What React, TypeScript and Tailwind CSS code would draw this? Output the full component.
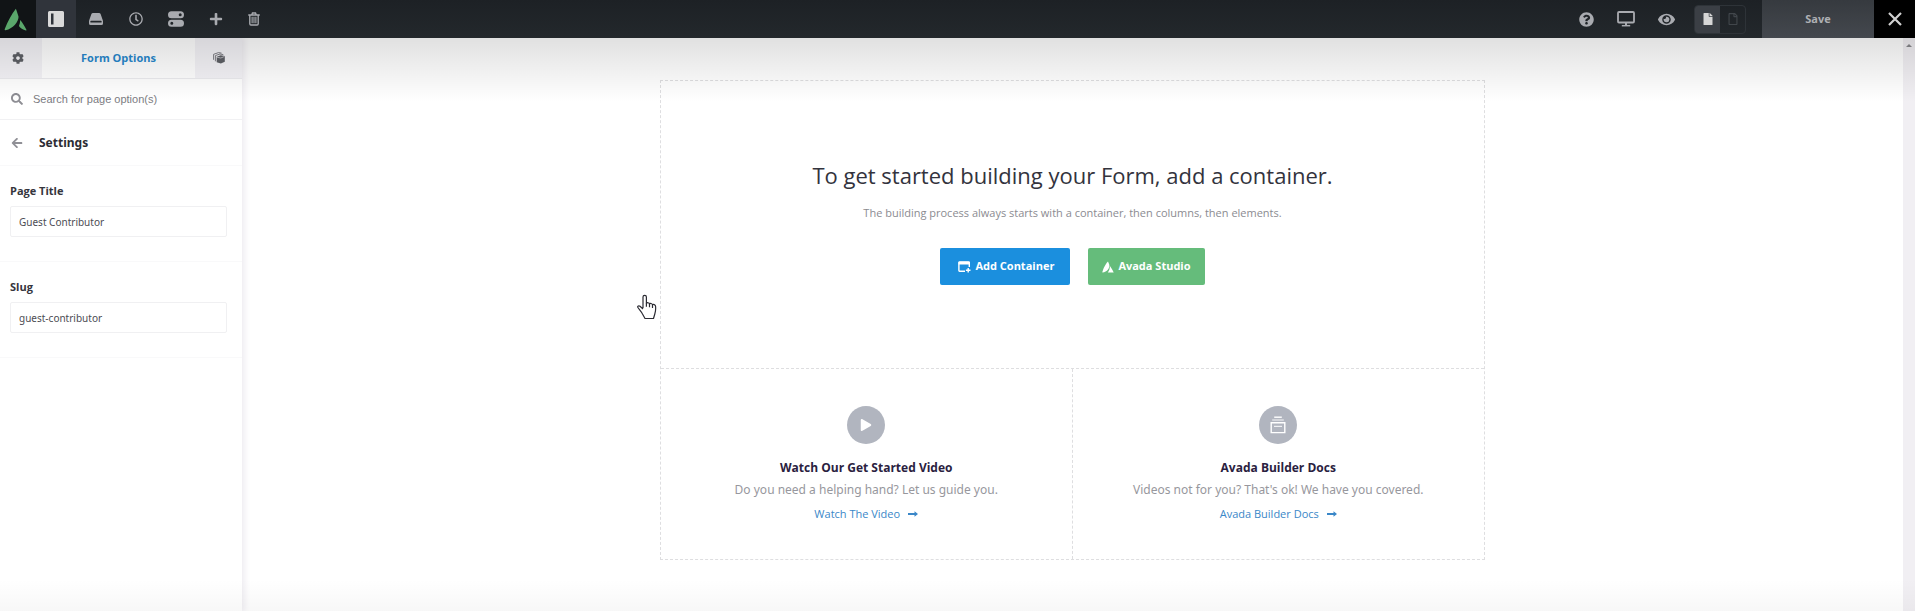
import type { ReactNode } from "react";
import { FaArrowLeft, FaCog, FaEye, FaFile, FaPlay, FaPlus, FaQuestionCircle, FaRegClock, FaRegFile, FaSearch } from "react-icons/fa";

function AvadaMark({ className }: { className?: string }) {
  return (
    <svg viewBox="0 0 24 24" fill="currentColor" className={className} aria-hidden="true">
      <path d="M12.400.8C13.400 3.600 14.600 7 15.200 9c-.2 5.600-5.200 12-13.600 14.200C.9 23.400.4 23 .8 22 4 14 8 6 12.400.8Z" />
      <path d="M17 12.500c2.400 3 4.700 7 6.400 10.200.2.500 0 .8-.5.700-3.200-.4-6-2.200-7.300-4.500.7-2 1.200-4.200 1.400-6.400Z" />
    </svg>
  );
}

function StudioMark() {
  return (
    <svg viewBox="0 0 12 12" fill="currentColor" className="size-3" aria-hidden="true">
      <path d="M6 .4 7.400 4C7.400 7.500 5.500 10.800.3 11.600.8 8 3.500 3 6 .4Z" />
      <path d="M7.800 4.800c1.500 2 3.200 4.800 3.900 6.800H5.800C7.300 9.800 7.900 7.500 7.800 4.800Z" />
    </svg>
  );
}

function PanelIcon() {
  return (
    <svg viewBox="0 0 16 16" className="size-4" fill="currentColor" aria-hidden="true">
      <path fillRule="evenodd" d="M1.500 0h13A1.500 1.500 0 0 1 16 1.500v13a1.500 1.500 0 0 1-1.500 1.500h-13A1.500 1.500 0 0 1 0 14.500v-13A1.500 1.500 0 0 1 1.500 0ZM3 2.500v11h2.500v-11Z" />
    </svg>
  );
}

function DriveIcon() {
  return (
    <svg viewBox="0 0 14 12" className="h-3 w-3.5" fill="currentColor" aria-hidden="true">
      <path fillRule="evenodd" d="M4 0h6c.8 0 1.300.4 1.600 1.100L13.700 7c.2.500.3.900.3 1.400v2A1.600 1.600 0 0 1 12.400 12H1.600A1.600 1.600 0 0 1 0 10.400v-2C0 7.900.1 7.500.3 7l2.100-5.900C2.700.4 3.200 0 4 0ZM2.200 7.800a.9.900 0 0 0 0 1.800h9.600a.9.900 0 0 0 0-1.800Z" />
    </svg>
  );
}

function TogglesIcon() {
  return (
    <svg viewBox="0 0 16 16" className="size-4" fill="currentColor" aria-hidden="true">
      <path fillRule="evenodd" d="M3.500.3h9a3.500 3.500 0 0 1 0 7h-9a3.500 3.500 0 0 1 0-7Zm8.700 2a1.500 1.500 0 1 0 0 3 1.500 1.500 0 0 0 0-3Z" />
      <path fillRule="evenodd" d="M3.500 8.700h9a3.500 3.500 0 0 1 0 7h-9a3.500 3.500 0 0 1 0-7Zm.3 2a1.500 1.500 0 1 0 0 3 1.500 1.500 0 0 0 0-3Z" />
    </svg>
  );
}

function TrashIcon() {
  return (
    <svg viewBox="0 0 14 16" className="h-3.5 w-3" fill="none" stroke="currentColor" aria-hidden="true">
      <path strokeWidth="1.600" d="M.3 3.400h13.400M4.300 3.200 5.200 1h3.600l.9 2.200M2.100 3.600v10c0 .9.5 1.400 1.300 1.400h7.200c.8 0 1.300-.5 1.300-1.400v-10" />
      <path strokeWidth="1.300" d="M4.800 5.500v7.500M7 5.500v7.500M9.200 5.500v7.500" />
    </svg>
  );
}

function DesktopIcon() {
  return (
    <svg viewBox="0 0 18 16" className="h-4 w-[18px]" fill="none" stroke="currentColor" aria-hidden="true">
      <rect x="1" y="1" width="16" height="10.500" rx="1" strokeWidth="1.800" />
      <path strokeWidth="2" d="M9 11v3.500" />
      <path strokeWidth="1.500" d="M4.800 14.700h8.400" />
    </svg>
  );
}

function CubesIcon() {
  return (
    <svg viewBox="0 0 12 12" className="size-3" aria-hidden="true">
      <path d="M.6 7.800V2.300L5.500.6l3 .5M2.400 9.300V3.600L7 2l3.300.6" fill="none" stroke="currentColor" strokeWidth=".8" />
      <path d="m3.700 4.800 4-1.500 4.100.7v5.800l-3.900 1.700-4.200-1.200Z" fill="currentColor" />
      <path d="m4 5.200 3.800.8 3.600-1.500" fill="none" stroke="#f1f0f4" strokeWidth=".6" />
    </svg>
  );
}

function AddContainerIcon() {
  return (
    <svg viewBox="0 0 13 12" className="h-3 w-[13px]" aria-hidden="true">
      <path d="M7 10.300H1.600a.7.700 0 0 1-.7-.7V1.700A.7.700 0 0 1 1.600 1h9a.7.700 0 0 1 .7.700V6" fill="none" stroke="currentColor" strokeWidth="1.400" />
      <path d="M.5.700h11.400v2.800H.5Z" fill="currentColor" />
      <path d="M10.200 7v4.600M7.900 9.300h4.600" stroke="currentColor" strokeWidth="1.400" />
    </svg>
  );
}

function DocsIcon() {
  return (
    <svg viewBox="0 0 16 18" className="h-[18px] w-4" fill="none" stroke="currentColor" aria-hidden="true">
      <path strokeWidth="1.400" d="M4.200 1.200h7.600" />
      <path strokeWidth=".9" d="M2.200 4h11.600" />
      <path strokeWidth="1.400" d="M1.200 6.800h13.600v9.800H1.200Z" />
      <path strokeWidth="1" d="M4 10.300h8" />
    </svg>
  );
}

function LongArrow() {
  return (
    <svg viewBox="0 0 10 6" className="h-1.5 w-2.5" fill="currentColor" aria-hidden="true">
      <path d="M0 2.100h6.500V.3L10 3 6.500 5.700V3.900H0Z" />
    </svg>
  );
}

function PointerHand({ className }: { className?: string }) {
  return (
    <svg viewBox="0 0 20 26" className={className} aria-hidden="true">
      <path
        d="M6 14V3a1.700 1.700 0 0 1 3.400 0v6.500c.3-1.200 3-1 3.100.6.4-1 2.800-.8 3 .8.700-.8 3-.4 3.100 1.600.2 2.500 0 5-.8 7.500L16.500 24.500H8L5.500 20C4.300 17.500 1.700 15 .8 13.300.3 12 1.900 11.300 3 12.200L6 15"
        fill="#fff"
        stroke="#2b2b33"
        strokeWidth="1.200"
        strokeLinejoin="round"
      />
      <path d="M9.400 9.500v3.300M12.500 10v3.300M15.500 11v3" stroke="#2b2b33" strokeWidth="1.200" />
    </svg>
  );
}

function BarButton({ label, active, children }: { label: string; active?: boolean; children: ReactNode }) {
  return (
    <button aria-label={label} className={active ? "flex w-10 items-center justify-center bg-[#30343b] text-[#dadada]" : "flex w-10 items-center justify-center text-[#a9abb0]"}>
      {children}
    </button>
  );
}

function Field({ id, label, value }: { id: string; label: string; value: string }) {
  return (
    <div className="border-b border-[#f9f9fa] px-2.5 pt-[15px] pb-6">
      <label htmlFor={id} className="block text-[11px] leading-5 font-bold text-[#35353d]">{label}</label>
      <input id={id} defaultValue={value} className="mt-[5px] block h-[31px] w-full max-w-[217px] rounded-xs border border-[#f0f0f2] bg-white px-2 font-['Noto_Sans',sans-serif] text-[10px] text-[#4c4c53] outline-none" />
    </div>
  );
}

function HelpCard({ icon, title, text, link }: { icon: ReactNode; title: string; text: string; link: string }) {
  return (
    <section className="flex flex-col items-center px-4 pt-[37px] pb-[33px] text-center">
      <div className="flex size-[38px] items-center justify-center rounded-full bg-[#b1b5bf] text-white">{icon}</div>
      <h2 className="mt-3 text-[12px] leading-6 font-bold text-[#2a2140]">{title}</h2>
      <p className="font-['Noto_Sans',sans-serif] text-[12px] leading-5 text-[#97979d]">{text}</p>
      <a href="#" className="mt-0.5 flex items-center gap-2 text-[11px] leading-6 text-[#3a87c8]">
        {link}
        <LongArrow />
      </a>
    </section>
  );
}

export default function App() {
  return (
    <div className="relative flex min-h-screen flex-col bg-white font-['Open_Sans',sans-serif]">
      <header className="relative z-10 flex h-[38px] justify-between bg-linear-to-b from-[#1d2125] to-[#23282c]">
        <div className="flex">
          <a href="#" aria-label="Avada" className="flex w-9 items-center justify-start bg-[#111416] pl-1 text-[#5aa76b]">
            <AvadaMark className="size-[23px]" />
          </a>
          <BarButton label="Toggle sidebar" active><PanelIcon /></BarButton>
          <BarButton label="Library"><DriveIcon /></BarButton>
          <BarButton label="History"><FaRegClock className="size-3.5" /></BarButton>
          <BarButton label="Preferences"><TogglesIcon /></BarButton>
          <BarButton label="Add new"><FaPlus className="size-3.5" /></BarButton>
          <button aria-label="Clear layout" className="flex w-9 items-center justify-center text-[#a9abb0]"><TrashIcon /></button>
        </div>
        <div className="flex">
          <BarButton label="Help"><FaQuestionCircle className="size-[15px]" /></BarButton>
          <BarButton label="Responsive view"><DesktopIcon /></BarButton>
          <BarButton label="Preview"><FaEye className="size-[17px]" /></BarButton>
          <div className="mr-4 ml-2 flex h-[29px] w-[52px] self-center overflow-hidden rounded-sm border border-[#2e3338]">
            <button aria-label="Filled" className="flex flex-1 items-center justify-center bg-[#3b3f45] text-[#d6d6d6]"><FaFile className="size-3" /></button>
            <button aria-label="Empty" className="flex flex-1 items-center justify-center text-[#41464b]"><FaRegFile className="size-3" /></button>
          </div>
          <button className="w-28 bg-linear-to-b from-[#363a3f] to-[#44484e] text-[11px] font-bold text-[#aeb0b3]">Save</button>
          <button aria-label="Close" className="flex w-[41px] items-center justify-center bg-black text-[#d0d0d0]">
            <svg viewBox="0 0 14 14" className="size-3.5" stroke="currentColor" strokeWidth="2.200" aria-hidden="true"><path d="m1 1 12 12M13 1 1 13" /></svg>
          </button>
        </div>
      </header>

      <div className="flex flex-1">
        <aside className="w-[242px] shrink-0 shadow-[2px_0_6px_1px_#efedf2]">
          <div className="flex h-[41px] border-b border-[#ebebee]">
            <button aria-label="Settings" className="flex w-[42px] items-center justify-center bg-[#f4f3f7] pr-1.5 text-[#5e6066]"><FaCog className="size-3" /></button>
            <button className="flex-1 text-[11px] font-bold text-[#2787cc]">Form Options</button>
            <button aria-label="Elements" className="flex w-[47px] items-center justify-center bg-[#f4f3f7] text-[#5e6066]"><CubesIcon /></button>
          </div>
          <label className="flex h-[41px] items-center gap-2.5 border-b border-[#f1f1f3] px-[11px]">
            <FaSearch className="size-3 text-[#8e8e94]" />
            <input placeholder="Search for page option(s)" aria-label="Search for page option(s)" className="min-w-0 flex-1 bg-transparent font-['Liberation_Sans',sans-serif] text-[11px] outline-none placeholder:text-[#7c7c82]" />
          </label>
          <div className="flex h-[46px] items-center gap-4 border-b border-[#f9f9fa] px-[11px]">
            <button aria-label="Back" className="text-[#909096]"><FaArrowLeft className="size-3" /></button>
            <h2 className="font-['Noto_Sans',sans-serif] text-[12px] font-bold text-[#2c2c33]">Settings</h2>
          </div>
          <Field id="page-title" label="Page Title" value="Guest Contributor" />
          <Field id="slug" label="Slug" value="guest-contributor" />
        </aside>

        <main className="flex-1 px-8 pt-[42px] pb-12">
          <div className="relative mx-auto max-w-[825px] border border-dashed border-[#dedee0]">
            <section className="flex flex-col items-center px-4 pt-[76px] pb-[83px] text-center">
              <h1 className="text-[22px] leading-9 text-[#33333d]">To get started building your Form, add a container.</h1>
              <p className="mt-2 text-[11px] leading-6 text-[#8b8b91]">The building process always starts with a container, then columns, then elements.</p>
              <div className="mt-[23px] flex gap-[18px] text-[11px] font-bold text-white">
                <button className="flex h-[37px] items-center gap-1 rounded-xs bg-[#1b8fde] pr-4 pl-[18px]"><AddContainerIcon />Add Container</button>
                <button className="flex h-[37px] items-center gap-1 rounded-xs bg-[#65bc7b] px-3.5"><StudioMark />Avada Studio</button>
              </div>
            </section>
            <div className="grid grid-cols-2 divide-x divide-dashed divide-[#dedee0] border-t border-dashed border-[#dedee0]">
              <HelpCard icon={<FaPlay className="size-3" />} title="Watch Our Get Started Video" text="Do you need a helping hand? Let us guide you." link="Watch The Video" />
              <HelpCard icon={<DocsIcon />} title="Avada Builder Docs" text="Videos not for you? That's ok! We have you covered." link="Avada Builder Docs" />
            </div>
            <PointerHand className="absolute top-[213px] -left-6 h-[26px] w-5" />
          </div>
        </main>

        <div className="w-3 bg-[#f1eff3] pt-1.5">
          <svg viewBox="0 0 6 3" className="mx-auto h-[3px] w-1.5" fill="#88888c" aria-hidden="true"><path d="M3 0 6 3H0Z" /></svg>
        </div>
      </div>

      <div className="pointer-events-none absolute inset-x-0 top-[38px] h-16 bg-linear-to-b from-black/12 to-transparent" />
      <div className="pointer-events-none absolute inset-x-0 bottom-0 h-8 bg-linear-to-t from-black/3 to-transparent" />
    </div>
  );
}
